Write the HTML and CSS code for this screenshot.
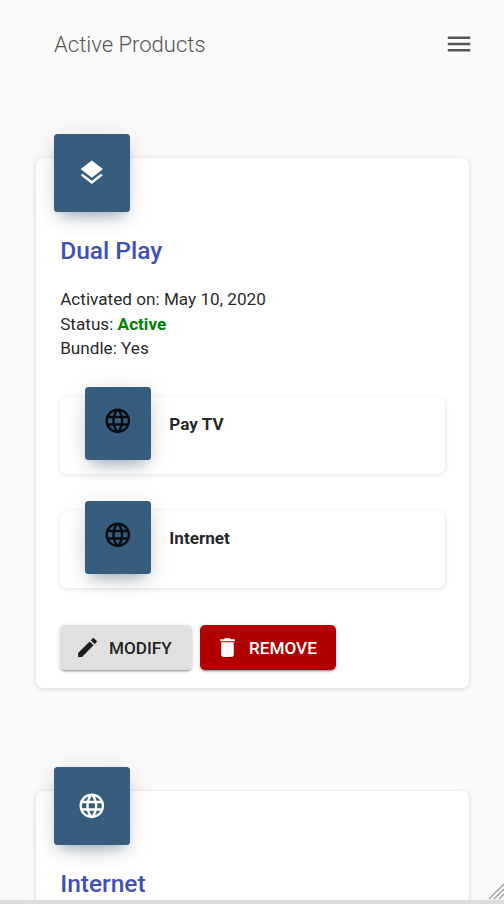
FILE: index.html
```html
<!DOCTYPE html>
<html lang="en">
<head>
<meta charset="utf-8">
<title>Active Products</title>
<link rel="stylesheet" href="styles.css">
</head>
<body>
<svg class="defs" aria-hidden="true">
  <symbol id="globe" viewBox="0 0 24 24"><path d="M11.99 2C6.47 2 2 6.48 2 12s4.47 10 9.99 10C17.52 22 22 17.52 22 12S17.52 2 11.99 2zm6.93 6h-2.95c-.32-1.25-.78-2.45-1.38-3.56 1.84.63 3.37 1.91 4.33 3.56zM12 4.04c.83 1.2 1.48 2.53 1.91 3.96h-3.82c.43-1.43 1.08-2.76 1.91-3.96zM4.26 14C4.1 13.36 4 12.69 4 12s.1-1.36.26-2h3.38c-.08.66-.14 1.32-.14 2 0 .68.06 1.34.14 2H4.26zm.82 2h2.95c.32 1.25.78 2.45 1.38 3.56-1.84-.63-3.37-1.9-4.33-3.56zm2.95-8H5.08c.96-1.66 2.49-2.93 4.33-3.56C8.81 5.55 8.35 6.75 8.03 8zM12 19.96c-.83-1.2-1.48-2.53-1.91-3.96h3.82c-.43 1.43-1.08 2.76-1.91 3.96zM14.34 14H9.66c-.09-.66-.16-1.32-.16-2 0-.68.07-1.35.16-2h4.68c.09.65.16 1.32.16 2 0 .68-.07 1.34-.16 2zm.25 5.56c.6-1.11 1.06-2.31 1.38-3.56h2.95c-.96 1.65-2.49 2.93-4.33 3.56zM16.36 14c.08-.66.14-1.32.14-2 0-.68-.06-1.34-.14-2h3.38c.16.64.26 1.31.26 2s-.1 1.36-.26 2h-3.38z"/></symbol>
</svg>
<header class="topbar">
  <h1>Active Products</h1>
  <svg class="menu" viewBox="0 0 24 24"><path d="M3 18h18v-2H3v2zm0-5h18v-2H3v2zm0-7v2h18V6H3z"/></svg>
</header>
<main>
  <section class="card">
    <div class="tile"><svg viewBox="0 0 24 24"><path d="M11.99 18.54l-7.37-5.73L3 14.07l9 7 9-7-1.63-1.27-7.38 5.74zM12 16l7.36-5.73L21 9l-9-7-9 7 1.63 1.27L12 16z"/></svg></div>
    <h2>Dual Play</h2>
    <div class="details">
      <div>Activated on: May 10, 2020</div>
      <div>Status: <b class="active">Active</b></div>
      <div>Bundle: Yes</div>
    </div>
    <div class="service">
      <div class="tile"><svg><use href="#globe"/></svg></div>
      <b>Pay TV</b>
    </div>
    <div class="service">
      <div class="tile"><svg><use href="#globe"/></svg></div>
      <b>Internet</b>
    </div>
    <div class="actions">
      <button class="modify"><svg viewBox="0 0 24 24"><path d="M3 17.25V21h3.75L17.81 9.94l-3.75-3.75L3 17.25zM20.71 7.04c.39-.39.39-1.02 0-1.41l-2.34-2.34c-.39-.39-1.02-.39-1.41 0l-1.83 1.83 3.75 3.75 1.83-1.83z"/></svg><span>MODIFY</span></button>
      <button class="remove"><svg viewBox="0 0 24 24"><path d="M6 19c0 1.1.9 2 2 2h8c1.1 0 2-.9 2-2V7H6v12zM19 4h-3.500l-1-1h-5l-1 1H5v2h14V4z"/></svg><span>REMOVE</span></button>
    </div>
  </section>
  <section class="card partial">
    <div class="tile"><svg><use href="#globe"/></svg></div>
    <h2>Internet</h2>
  </section>
</main>
<svg class="grip" viewBox="0 0 16 16"><path d="M1 15L16 0M6 15L16 5M11 15L16 10"/></svg>
<div class="edge"></div>
</body>
</html>
```
FILE: styles.css
```css
* { box-sizing: border-box; }
html, body { height: 100%; }
body {
  margin: 0;
  overflow: hidden;
  background: #fafafa;
  color: rgba(0, 0, 0, .87);
  font: 17.15px/24.5px Roboto, sans-serif;
}
svg { display: block; fill: currentColor; }
.defs { position: absolute; width: 0; height: 0; }
.topbar {
  display: flex;
  align-items: center;
  justify-content: space-between;
  height: 89px;
  padding: 0 30px 0 54px;
  color: #555;
}
h1 { margin: 0; font-size: 22.05px; font-weight: 300; line-height: 30px; }
.menu { width: 30px; height: 30px; margin-bottom: .2px; }
main { padding: 69px 35px 0 36px; }
.card {
  height: 530px;
  margin-bottom: 103px;
  padding: 0 24px;
  border-radius: 7px;
  background: #fff;
  box-shadow: 0 1px 5px rgba(0, 0, 0, .14);
}
.partial { height: 113px; margin-bottom: 0; border-radius: 7px 7px 0 0; }
.tile {
  display: flex;
  align-items: center;
  justify-content: center;
  border-radius: 3.5px;
  background: #365d7e;
  box-shadow: 0 12px 20px -10px rgba(54, 93, 126, .28), 0 4px 24px rgba(0, 0, 0, .12), 0 8px 10px -5px rgba(54, 93, 126, .2);
}
.tile svg { width: 29.6px; height: 29.6px; }
.card > .tile {
  width: 76px;
  height: 78px;
  margin: 0 0 0 -6px;
  transform: translateY(-24px);
  color: #fff;
}
h2 {
  margin: -2px 0 19px;
  padding-left: .2px;
  color: #3f51b5;
  font-size: 24.5px;
  font-weight: 500;
  line-height: 34px;
}
.partial h2 { margin-bottom: 0; }
.details { height: 110px; padding-left: .2px; }
.service {
  display: flex;
  height: 77px;
  margin-bottom: 37px;
  padding-left: 25px;
  border-radius: 7px;
  box-shadow: 0 1px 5px rgba(0, 0, 0, .12);
}
.service .tile { width: 66px; height: 73px; margin: -10px 18.3px 0 0; padding-bottom: 6px; }
.service b { margin-top: 15px; }
.actions { display: flex; gap: 8px; }
button {
  display: flex;
  align-items: center;
  gap: 9px;
  width: 132px;
  height: 45px;
  padding: 0 0 0 15px;
  border: 0;
  border-radius: 5px;
  background: #e0e0e0;
  color: rgba(0, 0, 0, .87);
  font: 500 17.15px/24px Roboto, sans-serif;
  box-shadow: 0 3px 1px -2px rgba(0, 0, 0, .2), 0 2px 2px rgba(0, 0, 0, .14), 0 1px 5px rgba(0, 0, 0, .12);
}
button svg { width: 25px; height: 25px; }
button span { padding-top: 1px; }
.remove { width: 136px; background: #b00000; color: #fff; }
.active { color: #008000; }
.grip {
  position: absolute;
  right: 0;
  bottom: 4px;
  width: 16px;
  height: 16px;
  fill: none;
  stroke: #999;
  stroke-width: 1.3;
}
.edge { position: absolute; left: 0; right: 0; bottom: 0; height: 4px; background: #ddd; }
```
